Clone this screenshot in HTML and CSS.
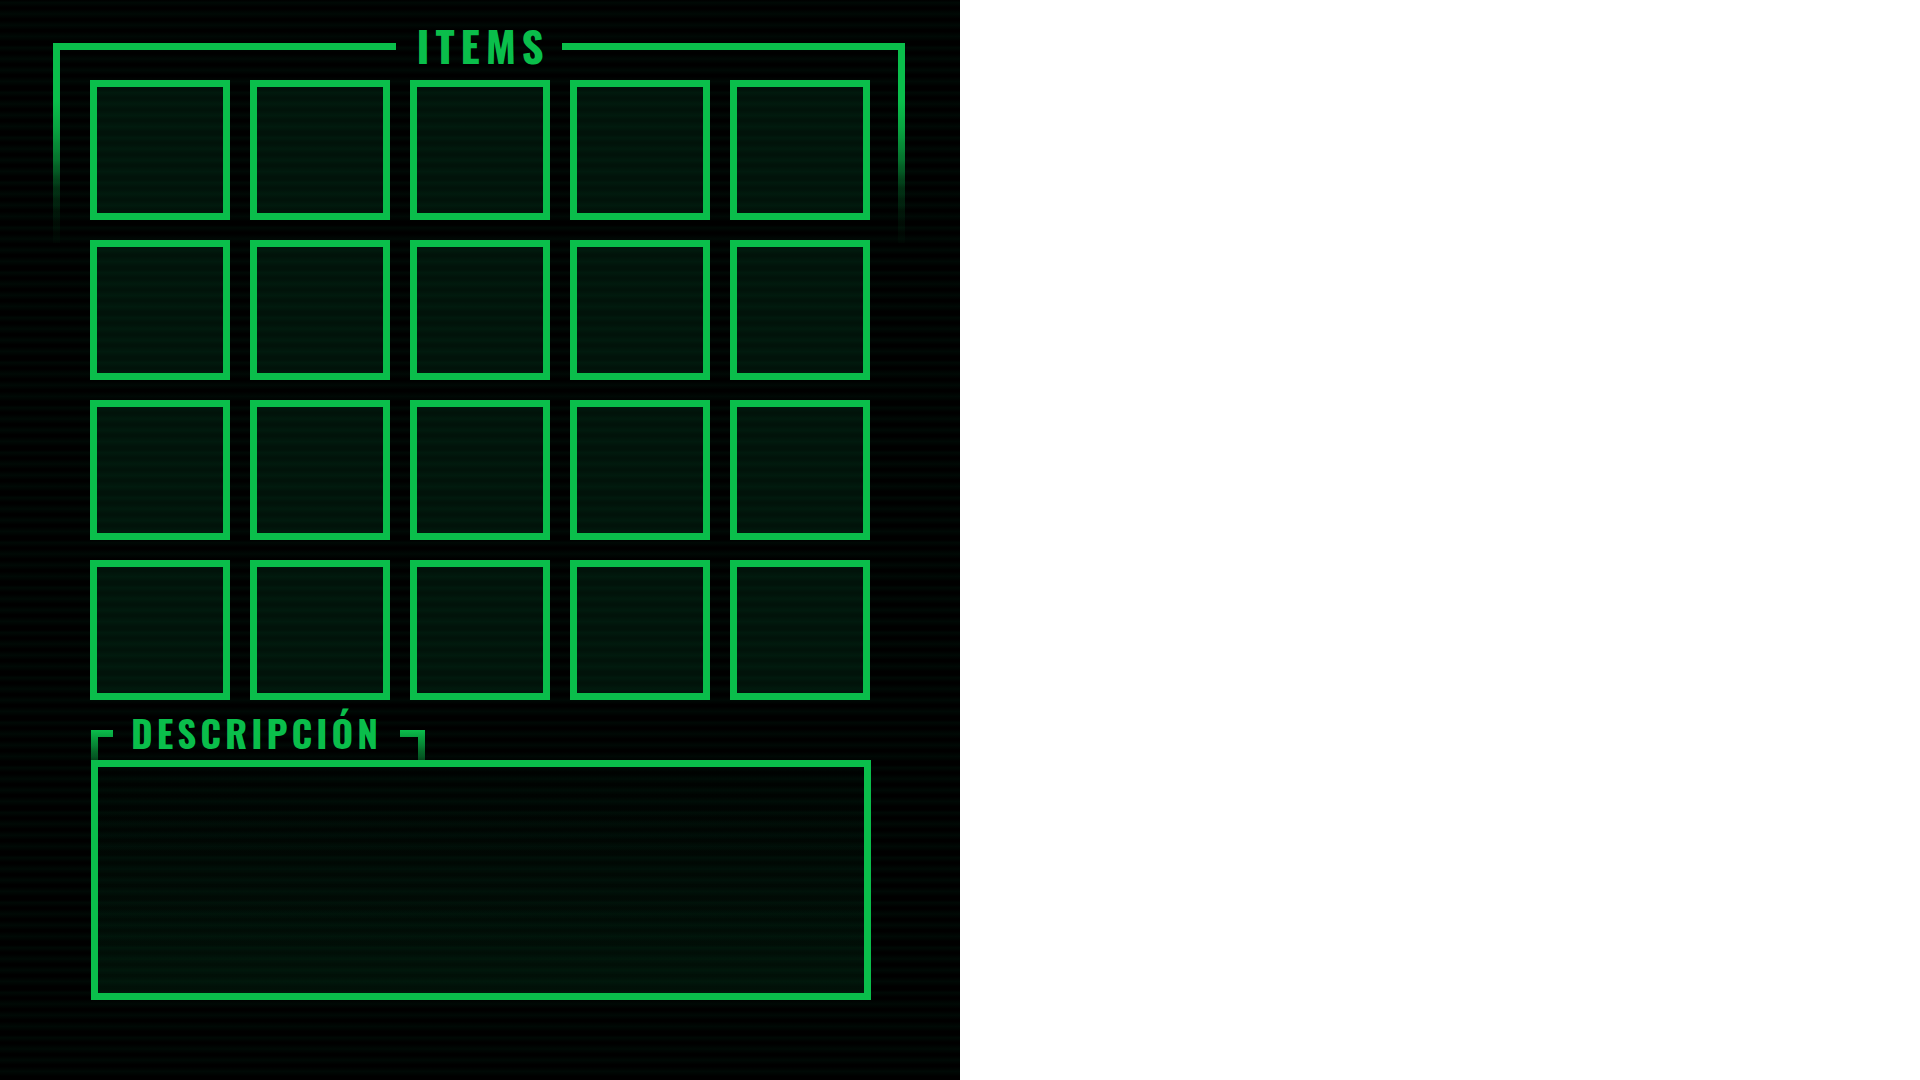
FILE: index.html
```html
<!DOCTYPE html>
<html lang="es">
<head>
<meta charset="utf-8">
<title>Items</title>
<link rel="stylesheet" href="styles.css">
</head>
<body>
<main class="panel">
  <section class="frame">
    <span class="bracket bracket-left"></span>
    <h1 class="title">ITEMS</h1>
    <span class="bracket bracket-right"></span>
    <ul class="slots">
      <li class="slot"></li><li class="slot"></li><li class="slot"></li><li class="slot"></li><li class="slot"></li>
      <li class="slot"></li><li class="slot"></li><li class="slot"></li><li class="slot"></li><li class="slot"></li>
      <li class="slot"></li><li class="slot"></li><li class="slot"></li><li class="slot"></li><li class="slot"></li>
      <li class="slot"></li><li class="slot"></li><li class="slot"></li><li class="slot"></li><li class="slot"></li>
    </ul>
  </section>
  <section class="description">
    <header class="tab">
      <span class="tick tick-left"></span>
      <h2 class="subtitle">DESCRIPCIÓN</h2>
      <span class="tick tick-right"></span>
    </header>
    <div class="details"></div>
  </section>
</main>
</body>
</html>
```
FILE: styles.css
```css
:root {
  --green: #0abe4b;
  --line: 7px;
  /* four scanlines per 45px tile */
  --scan: linear-gradient(
    transparent 0%, rgba(0, 90, 50, 0.1) 6%, transparent 16%,
    transparent 20%, rgba(0, 90, 50, 0.1) 31%, transparent 42%,
    transparent 46%, rgba(0, 90, 50, 0.1) 56%, transparent 66%,
    transparent 70%, rgba(0, 90, 50, 0.1) 81%, transparent 92%);
}

* { box-sizing: border-box; }

body {
  margin: 0;
  background: #fff;
  color: var(--green);
  font-family: "Oswald", "Liberation Sans", sans-serif;
}

.panel {
  width: 50%;
  min-height: 100vh;
  padding: 14px 55px 80px 53px;
  background: var(--scan) 0 0 / 100% 45px fixed, #000;
}

.frame {
  display: grid;
  grid-template-columns: 1fr auto 1fr;
  grid-template-rows: 66px auto;
}

.bracket {
  grid-row: 1 / span 2;
  align-self: start;
  height: 200px;
  margin-top: 29px;
  border: var(--line) solid transparent;
  border-bottom: 0;
  border-image: linear-gradient(var(--green) 28%, rgba(10, 190, 75, 0.85) 42%, rgba(10, 190, 75, 0.6) 56%, rgba(10, 190, 75, 0.25) 70%, rgba(10, 190, 75, 0.08) 84%, transparent) 7;
}

.bracket-left { grid-column: 1; border-right: 0; }
.bracket-right { grid-column: 3; border-left: 0; }

.title,
.subtitle {
  margin: 0;
  font-weight: 700;
  white-space: nowrap;
}

.title {
  grid-column: 2;
  grid-row: 1;
  padding: 0 12px 0 20px;
  font-size: 43px;
  line-height: 62px;
  letter-spacing: 6px;
}

.slots {
  grid-column: 1 / -1;
  grid-row: 2;
  display: grid;
  grid-template-columns: repeat(5, 1fr);
  gap: 20px;
  margin: 0 35px 0 37px;
  padding: 0;
  list-style: none;
}

.slot {
  aspect-ratio: 1;
  border: var(--line) solid var(--green);
  background: var(--scan) 0 0 / 100% 45px fixed, #01130a;
}

.description {
  margin: 0 34px 0 38px;
}

.tab {
  display: flex;
  align-items: center;
  width: 334px;
  height: 60px;
}

.tick {
  align-self: flex-end;
  height: 30px;
  border: var(--line) solid transparent;
  border-bottom: 0;
  border-image: linear-gradient(var(--green), rgba(10, 190, 75, 0.8) 30%, rgba(10, 190, 75, 0.15)) 7;
}

.tick-left { width: 22px; border-right: 0; }
.tick-right { width: 25px; margin-left: auto; border-left: 0; }

.subtitle {
  padding: 6px 0 0 18px;
  font-size: 37px;
  line-height: 56px;
  letter-spacing: 4px;
}

.details {
  height: 240px;
  border: var(--line) solid var(--green);
  background: var(--scan) 0 0 / 100% 45px fixed, linear-gradient(#000201, #011108);
}
```
